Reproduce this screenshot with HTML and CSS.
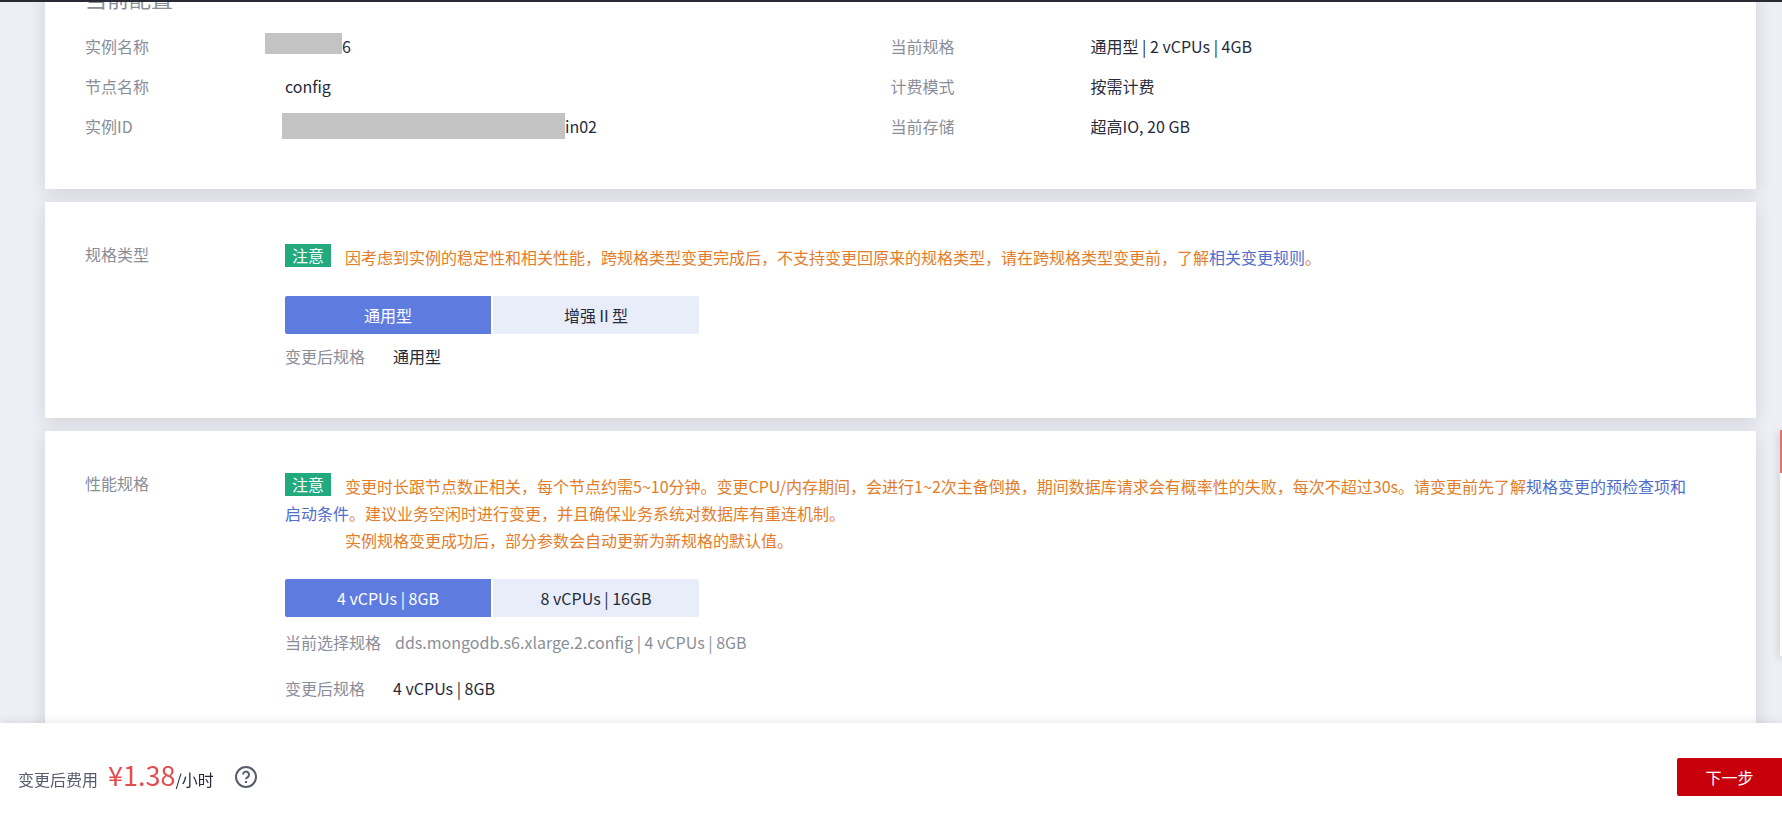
FILE: index.html
```
<!DOCTYPE html>
<html lang="zh-CN">
<head>
    <meta charset="UTF-8">
    <meta name="viewport" content="width=device-width, initial-scale=1.0">
    <title>规格变更</title>
    <link rel="stylesheet" href="styles.css">
</head>
<body>
    <header class="top-bar"></header>

    <main class="content">
        <section class="card current">
            <h2>当前配置</h2>
            <dl class="info">
                <div class="info-item">
                    <dt>实例名称</dt>
                    <dd><span class="mask mask-name"></span>6</dd>
                </div>
                <div class="info-item">
                    <dt>当前规格</dt>
                    <dd>通用型 | 2 vCPUs | 4GB</dd>
                </div>
                <div class="info-item">
                    <dt>节点名称</dt>
                    <dd>config</dd>
                </div>
                <div class="info-item">
                    <dt>计费模式</dt>
                    <dd>按需计费</dd>
                </div>
                <div class="info-item">
                    <dt>实例ID</dt>
                    <dd><span class="mask mask-id"></span>in02</dd>
                </div>
                <div class="info-item">
                    <dt>当前存储</dt>
                    <dd>超高IO, 20 GB</dd>
                </div>
            </dl>
        </section>

        <section class="card form-row">
            <h3 class="form-label">规格类型</h3>
            <div class="form-body">
                <p class="notice"><span class="badge">注意</span>因考虑到实例的稳定性和相关性能，跨规格类型变更完成后，不支持变更回原来的规格类型，请在跨规格类型变更前，了解<a href="#">相关变更规则</a>。</p>
                <div class="segment">
                    <button type="button" class="active">通用型</button>
                    <button type="button">增强Ⅱ型</button>
                </div>
                <p class="result"><span class="result-label">变更后规格</span>通用型</p>
            </div>
        </section>

        <section class="card form-row">
            <h3 class="form-label">性能规格</h3>
            <div class="form-body">
                <p class="notice"><span class="badge">注意</span>变更时长跟节点数正相关，每个节点约需5~10分钟。变更CPU/内存期间，会进行1~2次主备倒换，期间数据库请求会有概率性的失败，每次不超过30s。请变更前先了解<a href="#">规格变更的预检查项和启动条件</a>。建议业务空闲时进行变更，并且确保业务系统对数据库有重连机制。</p>
                <p class="notice notice-more">实例规格变更成功后，部分参数会自动更新为新规格的默认值。</p>
                <div class="segment">
                    <button type="button" class="active">4 vCPUs | 8GB</button>
                    <button type="button">8 vCPUs | 16GB</button>
                </div>
                <p class="selected"><span class="selected-label">当前选择规格</span>dds.mongodb.s6.xlarge.2.config | 4 vCPUs | 8GB</p>
                <p class="result"><span class="result-label">变更后规格</span>4 vCPUs | 8GB</p>
            </div>
        </section>
    </main>

    <aside class="side-panel">
        <div class="side-hot"></div>
    </aside>

    <footer class="footer">
        <div class="fee">
            <span class="fee-label">变更后费用</span>
            <span class="price">¥1.38</span>
            <span class="unit">/小时</span>
        </div>
        <svg class="help" viewBox="0 0 24 24" fill="none" stroke="#575d6c" stroke-width="2">
            <circle cx="12" cy="12" r="10"/>
            <path d="M9 9.6a3 3 0 1 1 4.6 2.5c-1 .6-1.6 1.1-1.6 2.2"/>
            <path d="M12 16v2"/>
        </svg>
        <button type="button" class="next">下一步</button>
    </footer>
</body>
</html>
```
FILE: styles.css
```
* {
    box-sizing: border-box;
}

body {
    margin: 0;
    height: 100vh;
    overflow: hidden;
    background: #eeeff5;
    color: #252b3a;
    font-family: "Noto Sans CJK SC", sans-serif;
    font-size: 16px;
    line-height: 27px;
}

h2, h3, p, dl, dd {
    margin: 0;
    font-weight: normal;
}

a {
    color: #526ecc;
    text-decoration: none;
}

button {
    border: none;
    padding: 0;
    font: inherit;
    cursor: pointer;
}

.top-bar {
    position: fixed;
    top: 0;
    left: 0;
    right: 0;
    height: 2px;
    background: #282b33;
    z-index: 3;
}

/* page is scrolled, the heading is half hidden */
.content {
    display: flex;
    flex-direction: column;
    gap: 13px;
    margin: -40px 26px 0 45px;
}

.card {
    padding: 40px 60px 48px 40px;
    background: #fff;
    box-shadow: 0 4px 16px rgba(37, 43, 58, 0.14);
}

.current {
    padding-top: 24px;
    padding-bottom: 49px;
}

h2 {
    color: #8a8e99;
    font-size: 22px;
    line-height: 27px;
    margin-bottom: 22px;
}

.info {
    display: grid;
    grid-template-columns: 1fr 1fr;
    row-gap: 13px;
}

.info-item {
    display: flex;
}

dt {
    width: 200px;
    color: #8a8e99;
}

dd {
    display: flex;
    align-items: center;
}

.mask {
    background: #c3c3c3;
}

.mask-name {
    width: 77px;
    height: 21px;
    margin: 0 0 6px -20px;
}

.mask-id {
    width: 283px;
    height: 26px;
    margin: 0 0 1px -3px;
}

.form-row {
    display: flex;
}

.form-label {
    flex: none;
    width: 200px;
    color: #8a8e99;
    font-size: 16px;
    line-height: 25px;
}

.form-body {
    flex: 1;
    padding-top: 2px;
}

.notice {
    color: #e37d29;
}

.notice-more {
    padding-left: 60px;
}

.badge {
    display: inline-block;
    margin-right: 14px;
    padding: 0 7px;
    background: #23a97e;
    color: #fff;
    line-height: 23px;
    vertical-align: 2px;
}

.segment {
    display: flex;
    gap: 2px;
    margin: 25px 0 9px;
}

.segment button {
    width: 206px;
    height: 38px;
    background: #e9edfa;
    color: #252b3a;
}

.segment button:first-child {
    border-radius: 2px 0 0 2px;
}

.segment button:last-child {
    border-radius: 0 2px 2px 0;
}

.segment .active {
    background: #5e7ce0;
    color: #fff;
}

.selected {
    margin: 12px 0 19px;
    color: #8a8e99;
}

.selected-label {
    margin-right: 14px;
}

.result-label {
    margin-right: 28px;
    color: #8a8e99;
}

.side-panel {
    position: fixed;
    top: 430px;
    right: 0;
    width: 2px;
    height: 226px;
    background: #fff;
    box-shadow: 0 2px 8px rgba(0, 0, 0, 0.4);
}

.side-hot {
    height: 43px;
    background: #e3716c;
}

.footer {
    position: fixed;
    left: 0;
    right: 0;
    bottom: 0;
    display: flex;
    align-items: center;
    height: 102px;
    padding: 6px 0 0 18px;
    background: #fff;
    box-shadow: 0 0 10px rgba(0, 0, 0, 0.12);
    z-index: 2;
}

.fee {
    display: flex;
    align-items: baseline;
}

.fee-label {
    margin-right: 10px;
    color: #575d6c;
}

.price {
    color: #e34d4d;
    font-size: 27px;
}

.help {
    width: 24px;
    height: 24px;
    margin-left: 20px;
}

.next {
    width: 105px;
    height: 38px;
    margin-left: auto;
    border-radius: 2px 0 0 2px;
    background: #c7000b;
    color: #fff;
}
```
